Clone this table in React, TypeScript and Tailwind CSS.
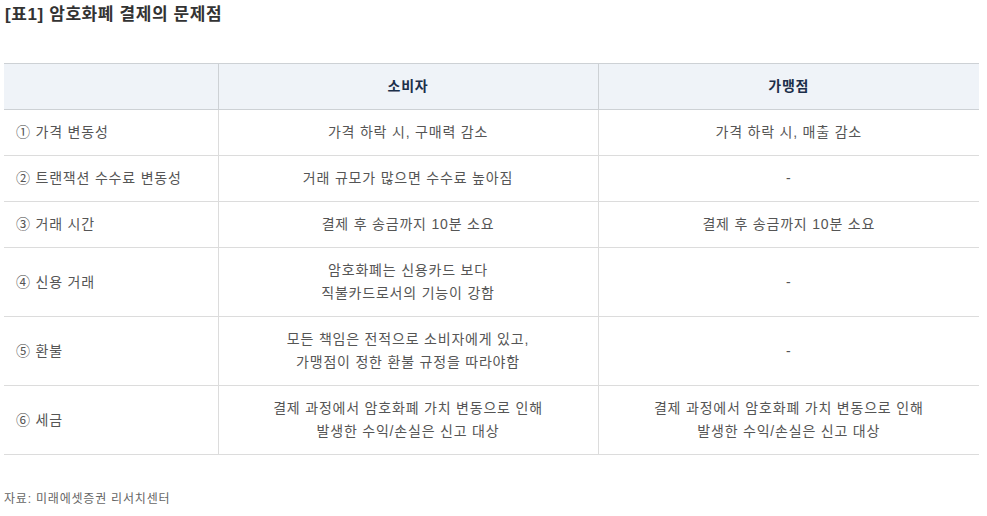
import React from 'react';

const rows = [
  { label: '① 가격 변동성', consumer: ['가격 하락 시, 구매력 감소'], merchant: ['가격 하락 시, 매출 감소'] },
  { label: '② 트랜잭션 수수료 변동성', consumer: ['거래 규모가 많으면 수수료 높아짐'], merchant: ['-'] },
  { label: '③ 거래 시간', consumer: ['결제 후 송금까지 10분 소요'], merchant: ['결제 후 송금까지 10분 소요'] },
  { label: '④ 신용 거래', consumer: ['암호화폐는 신용카드 보다', '직불카드로서의 기능이 강함'], merchant: ['-'] },
  { label: '⑤ 환불', consumer: ['모든 책임은 전적으로 소비자에게 있고,', '가맹점이 정한 환불 규정을 따라야함'], merchant: ['-'] },
  {
    label: '⑥ 세금',
    consumer: ['결제 과정에서 암호화폐 가치 변동으로 인해', '발생한 수익/손실은 신고 대상'],
    merchant: ['결제 과정에서 암호화폐 가치 변동으로 인해', '발생한 수익/손실은 신고 대상'],
  },
];

const Lines = ({ lines }: { lines: string[] }) => (
  <>
    {lines.map((l, i) => (
      <div key={i}>{l}</div>
    ))}
  </>
);

export default function App() {
  return (
    <div
      className="w-[987px] h-[516px] bg-white px-1 pt-[3px] text-[#555]"
      style={{ fontFamily: '"Liberation Sans", "Noto Sans CJK KR", sans-serif' }}
    >
      <h1 className="text-[17px] font-bold text-[#333] leading-[23px] pl-[1px] tracking-[0.6px]">[표1] 암호화폐 결제의 문제점</h1>

      <table className="mt-[37px] w-[975px] border-collapse text-[14px] leading-[23px] table-fixed tracking-[0.8px]">
        <colgroup>
          <col className="w-[214px]" />
          <col className="w-[380px]" />
          <col className="w-[381px]" />
        </colgroup>
        <thead>
          <tr className="bg-[#eff3f8]">
            <th className="h-[46px] border-t border-b border-[#cdd1d5]" />
            <th className="h-[46px] border-t border-b border-l border-[#cdd1d5] text-center font-bold text-[#1c2f4a]">소비자</th>
            <th className="h-[46px] border-t border-b border-l border-[#cdd1d5] text-center font-bold text-[#1c2f4a]">가맹점</th>
          </tr>
        </thead>
        <tbody>
          {rows.map((r) => (
            <tr key={r.label}>
              <td className="py-[11px] pl-[12px] border-b border-[#dcdcdc] text-left">{r.label}</td>
              <td className="py-[11px] border-b border-l border-[#dcdcdc] text-center">
                <Lines lines={r.consumer} />
              </td>
              <td className="py-[11px] border-b border-l border-[#dcdcdc] text-center">
                <Lines lines={r.merchant} />
              </td>
            </tr>
          ))}
        </tbody>
      </table>

      <p className="mt-[36px] text-[12px] text-[#666] leading-[16px] tracking-[0.8px]">자료: 미래에셋증권 리서치센터</p>
    </div>
  );
}
